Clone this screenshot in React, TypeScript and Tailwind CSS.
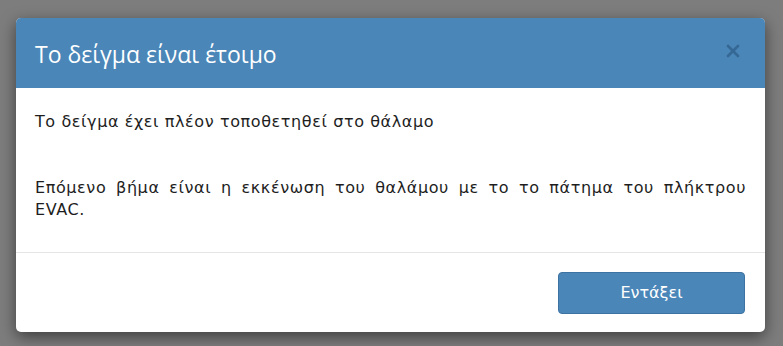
import { X } from 'lucide-react'

const font = { fontFamily: '"DejaVu Sans", Verdana, sans-serif' }

export default function App() {
  return (
    <div className="w-[783px] h-[346px] bg-[#7d7d7d] pt-[18px] pl-[16px]" style={font}>
      <div className="w-[749px] rounded-[5px] bg-white shadow-[0_5px_15px_rgba(0,0,0,0.5)] overflow-hidden">
        <div className="h-[70px] bg-[#4a86b8] flex items-center justify-between pl-[19px] pr-[22px]">
          <h2 className="text-[23px] text-white leading-none pt-[2px] font-['Open_Sans',sans-serif]">
            Το δείγμα είναι έτοιμο
          </h2>
          <button className="text-[#2f5e88] opacity-75 -mt-[4px]">
            <X size={20} strokeWidth={3.2} />
          </button>
        </div>
        <div className="px-[19px] pt-[23px] pb-[31px] text-[16px] tracking-[0.6px] leading-[22px] text-[#1e1e1e] text-justify">
          <p>Το δείγμα έχει πλέον τοποθετηθεί στο θάλαμο</p>
          <p className="mt-[44px]">
            Επόμενο βήμα είναι η εκκένωση του θαλάμου με το το πάτημα του πλήκτρου EVAC.
          </p>
        </div>
        <div className="border-t border-[#e5e5e5] flex justify-end pt-[19px] pb-[18px] pr-[20px]">
          <button className="w-[187px] h-[42px] rounded-[4px] bg-[#4a86b8] border border-[#3d73a2] text-white text-[16px]">
            Εντάξει
          </button>
        </div>
      </div>
    </div>
  )
}
